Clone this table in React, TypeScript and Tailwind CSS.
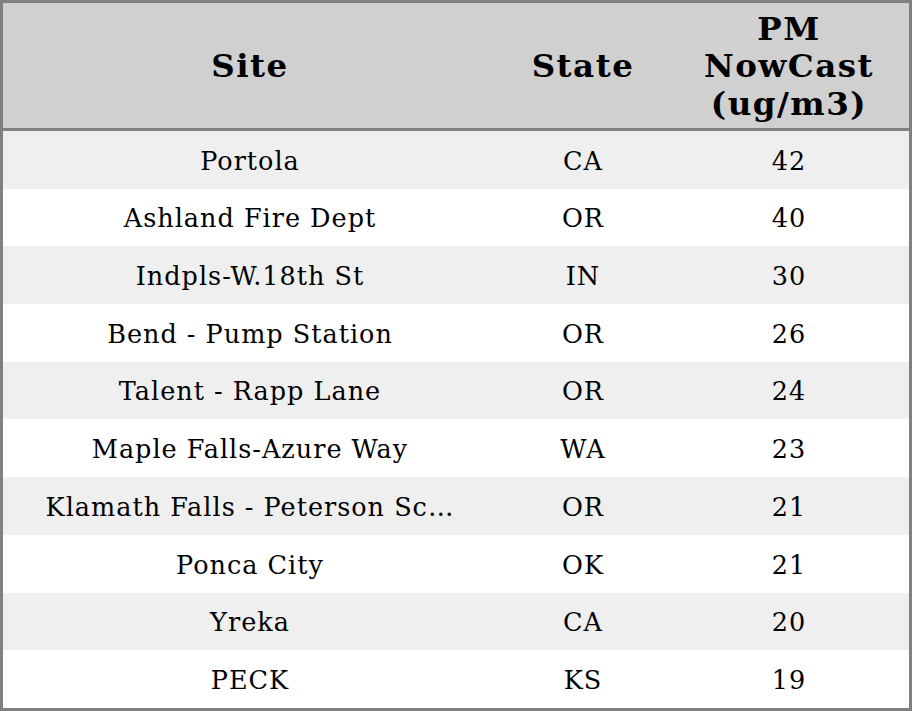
import React from 'react';

type Row = { site: string; state: string; pm: number };

const rows: Row[] = [
  { site: 'Portola', state: 'CA', pm: 42 },
  { site: 'Ashland Fire Dept', state: 'OR', pm: 40 },
  { site: 'Indpls-W.18th St', state: 'IN', pm: 30 },
  { site: 'Bend - Pump Station', state: 'OR', pm: 26 },
  { site: 'Talent - Rapp Lane', state: 'OR', pm: 24 },
  { site: 'Maple Falls-Azure Way', state: 'WA', pm: 23 },
  { site: 'Klamath Falls - Peterson Sc…', state: 'OR', pm: 21 },
  { site: 'Ponca City', state: 'OK', pm: 21 },
  { site: 'Yreka', state: 'CA', pm: 20 },
  { site: 'PECK', state: 'KS', pm: 19 },
];

const App: React.FC = () => {
  return (
    <div className="w-[912px] h-[711px] bg-white font-['DejaVu_Serif',serif] text-black">
      <div className="w-full h-full border-[3px] border-[#808080] flex flex-col">
        {/* header */}
        <div className="h-[128px] shrink-0 bg-[#d0d0d0] border-b-[3px] border-[#808080] grid grid-cols-[494px_172px_1fr] items-center text-[32.5px] tracking-[1.5px] font-bold text-center leading-[37.5px]">
          <div>Site</div>
          <div>State</div>
          <div className="pt-[1px]">
            PM
            <br />
            NowCast
            <br />
            (ug/m3)
          </div>
        </div>

        {rows.map((r, i) => (
          <div
            key={r.site}
            className={`h-[57.7px] shrink-0 pt-[2px] grid grid-cols-[494px_172px_1fr] items-center text-center text-[25.5px] tracking-[1px] ${i % 2 === 0 ? 'bg-[#efefef]' : 'bg-white'}`}
          >
            <div className="whitespace-nowrap">{r.site}</div>
            <div>{r.state}</div>
            <div>{r.pm}</div>
          </div>
        ))}
      </div>
    </div>
  );
};

export default App;
